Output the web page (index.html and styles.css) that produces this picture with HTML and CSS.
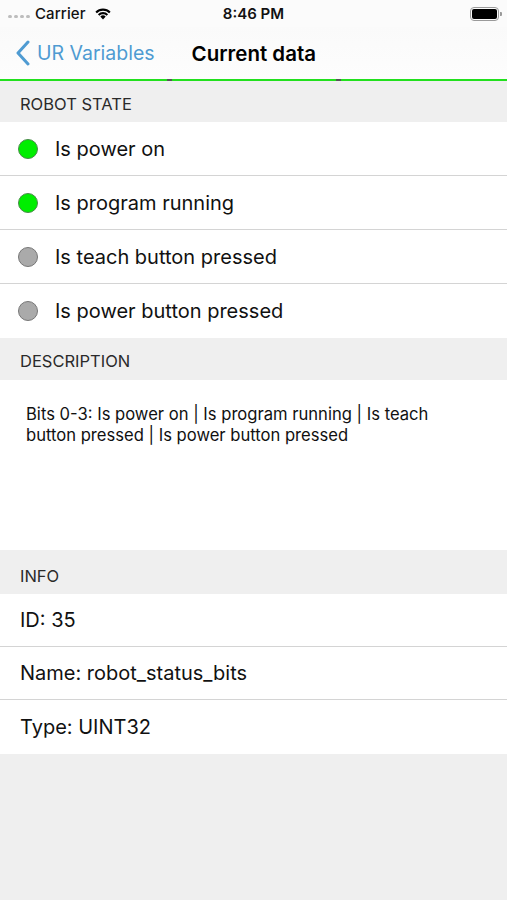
FILE: index.html
```html
<!DOCTYPE html>
<html>
<head>
<meta charset="utf-8">
<link rel="stylesheet" href="styles.css">
</head>
<body>
<div class="screen">
  <div class="statusbar">
    <div class="sb-left">
      <span class="dots"><i></i><i></i><i></i><i></i></span>
      <span class="carrier">Carrier</span>
      <svg class="wifi" width="18" height="13" viewBox="0 0 18 13"><path d="M9 12.5 L6.3 9.6 A3.9 3.9 0 0 1 11.7 9.6 Z" fill="#000"/><path d="M3.9 7.2 A7.3 7.3 0 0 1 14.1 7.2 L12.6 8.7 A5.2 5.2 0 0 0 5.4 8.7 Z" fill="#000"/><path d="M1.4 4.7 A10.8 10.8 0 0 1 16.6 4.7 L15.1 6.2 A8.7 8.7 0 0 0 2.9 6.2 Z" fill="#000"/></svg>
    </div>
    <div class="sb-time">8:46 PM</div>
    <div class="sb-right">
      <span class="battery"><span class="fill"></span></span><span class="nub"></span>
    </div>
  </div>
  <div class="navbar">
    <div class="back">
      <svg width="16" height="26" viewBox="0 0 16 26"><path d="M13 2 L3 13 L13 24" fill="none" stroke="#4f9bd2" stroke-width="3" stroke-linecap="round" stroke-linejoin="round"/></svg>
      <span>UR Variables</span>
    </div>
    <div class="title">Current data</div>
  </div>
  <div class="greenline"><i class="m1"></i><i class="m2"></i></div>

  <div class="section-h">ROBOT STATE</div>
  <div class="row"><span class="dot on"></span>Is power on</div>
  <div class="row"><span class="dot on"></span>Is program running</div>
  <div class="row"><span class="dot off"></span>Is teach button pressed</div>
  <div class="row last"><span class="dot off"></span>Is power button pressed</div>

  <div class="section-h desc-h">DESCRIPTION</div>
  <div class="desc">Bits 0-3: Is power on | Is program running | Is teach button pressed | Is power button pressed</div>

  <div class="section-h tall">INFO</div>
  <div class="row plain">ID: 35</div>
  <div class="row plain">Name: robot_status_bits</div>
  <div class="row plain last">Type: UINT32</div>
</div>
</body>
</html>
```
FILE: styles.css
```css
html, body {
  margin: 0;
  padding: 0;
  background: #efefef;
}
body {
  font-family: "Inter", "Liberation Sans", sans-serif;
  color: #111;
}
.screen {
  width: 507px;
  min-height: 900px;
  background: #efefef;
}
.statusbar {
  height: 27px;
  background: #fbfbfb;
  display: flex;
  align-items: center;
  justify-content: space-between;
  position: relative;
  font-size: 15px;
}
.sb-left {
  display: flex;
  align-items: center;
  padding-left: 8px;
  gap: 5px;
}
.dots {
  display: flex;
  gap: 2px;
  margin-top: 5px;
}
.dots i {
  width: 4px;
  height: 3px;
  border-radius: 2px;
  background: #bdbdbd;
}
.carrier {
  font-weight: 500;
  letter-spacing: 0.1px;
}
.wifi {
  margin-left: 3px;
}
.sb-time {
  position: absolute;
  left: 0;
  right: 0;
  text-align: center;
  font-weight: 600;
  font-size: 15px;
}
.sb-right {
  display: flex;
  align-items: center;
  padding-right: 5px;
}
.battery {
  width: 25px;
  height: 10px;
  border: 1.5px solid #9a9a9a;
  border-radius: 4px;
  padding: 1px;
  display: flex;
}
.battery .fill {
  flex: 1;
  background: #000;
  border-radius: 2px;
}
.nub {
  width: 2px;
  height: 4px;
  background: #9a9a9a;
  border-radius: 0 1px 1px 0;
  margin-left: 1px;
}
.navbar {
  height: 52px;
  background: linear-gradient(#fafafa, #fdfdfd);
  display: flex;
  align-items: center;
  position: relative;
}
.back {
  display: flex;
  align-items: center;
  padding-left: 15px;
  color: #4f9bd2;
  font-size: 19.5px;
  gap: 6px;
}
.title {
  margin-left: 37px;
  font-weight: 600;
  font-size: 20.5px;
  color: #000;
}
.greenline {
  height: 2px;
  background: #22e01e;
  position: relative;
}
.greenline i {
  position: absolute;
  top: 0;
  width: 5px;
  height: 2px;
  background: #555;
}
.greenline .m1 { left: 167px; }
.greenline .m2 { left: 336px; }
.section-h {
  height: 41px;
  box-sizing: border-box;
  padding-top: 4px;
  display: flex;
  align-items: center;
  padding-left: 20px;
  font-size: 16.5px;
  color: #2a2a2a;
  background: #efefef;
}
.section-h.desc-h {
  height: 42px;
}
.section-h.tall {
  height: 44px;
  padding-top: 7px;
}
.row {
  height: 53px;
  background: #fff;
  border-bottom: 1px solid #d4d4d4;
  display: flex;
  align-items: center;
  font-size: 20px;
  padding-left: 18px;
  color: #111;
}
.row.plain {
  padding-left: 20px;
  height: 52px;
}
.row.last {
  border-bottom: none;
  height: 54px;
}
.dot {
  width: 20px;
  height: 20px;
  border-radius: 50%;
  box-sizing: border-box;
  margin-right: 17px;
}
.dot.on {
  background: #00ee00;
  border: 1px solid #4a8a4a;
}
.dot.off {
  background: #aaaaaa;
  border: 1px solid #777;
}
.desc {
  height: 170px;
  background: #fff;
  box-sizing: border-box;
  padding: 24px 50px 0 26px;
  font-size: 16.6px;
  line-height: 21px;
  color: #111;
}
```
